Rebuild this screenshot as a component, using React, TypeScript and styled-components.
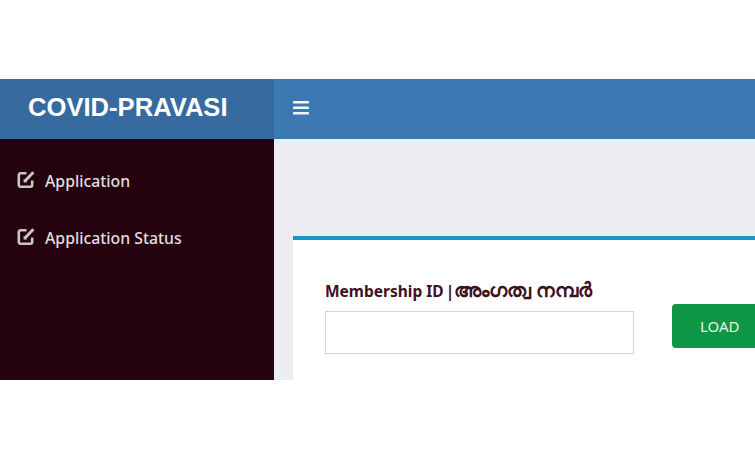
import React from 'react';
import styled, { createGlobalStyle } from 'styled-components';

const GlobalStyle = createGlobalStyle`
  html, body {
    margin: 0;
    padding: 0;
    background: #fff;
    overflow: hidden;
  }
  body {
    font-family: "Noto Sans", "Open Sans", sans-serif;
  }
`;

const Page = styled.div`
  width: 755px;
  height: 459px;
  padding-top: 79px;
  box-sizing: border-box;
`;

const Frame = styled.div`
  display: grid;
  grid-template-columns: 274px 1fr;
  grid-template-rows: 60px 241px;
  height: 301px;
  overflow: hidden;
`;

const Brand = styled.div`
  display: flex;
  align-items: center;
  padding: 0 0 3px 28px;
  box-sizing: border-box;
  background: #376a9f;
  color: #fff;
  font-family: "Liberation Sans", Arial, sans-serif;
  font-size: 25.6px;
  font-weight: 700;
`;

const TopBar = styled.div`
  display: flex;
  align-items: center;
  padding: 0 0 3px 19px;
  background: #3c79b3;
`;

const MenuButton = styled.svg`
  width: 16px;
  height: 14px;
  display: block;
`;

const Sidebar = styled.nav`
  display: flex;
  flex-direction: column;
  gap: 36px;
  padding: 32px 0 0 17px;
  background: #24030f;
`;

const NavItem = styled.a`
  display: flex;
  align-items: center;
  gap: 9px;
  height: 21px;
  color: #e2dee0;
  font-size: 15.8px;
  font-weight: 500;
  line-height: 21px;
`;

const NavIcon = styled.svg`
  width: 19px;
  height: 19px;
  flex: none;
  margin-top: -5px;
`;

const Content = styled.main`
  padding: 97px 0 0 19px;
  background: #ecedf3;
`;

const Card = styled.section`
  display: flex;
  gap: 38px;
  height: 200px;
  box-sizing: border-box;
  padding: 39px 0 0 32px;
  background: #fff;
  border-top: 4px solid #1a95bd;
`;

const Field = styled.div`
  display: flex;
  flex-direction: column;
  gap: 11px;
`;

const Label = styled.label`
  color: #3f1022;
  font-size: 15.5px;
  font-weight: 700;
  line-height: 21px;
  height: 21px;
  white-space: nowrap;
`;

const Divider = styled.span`
  margin: 0 0 0 2px;
`;

const NativeName = styled.span`
  font-size: 19.6px;
  line-height: 21px;
`;

const TextInput = styled.input`
  width: 309px;
  height: 43px;
  box-sizing: border-box;
  border: 1px solid #d8d2d6;
  background: #fff;
  outline: none;
`;

const LoadButton = styled.button`
  width: 100px;
  height: 44px;
  margin-top: 25px;
  flex: none;
  padding: 0;
  box-sizing: border-box;
  border: none;
  border-radius: 4px 0 0 4px;
  background: #0c9646;
  color: #e4f3ea;
  font-family: inherit;
  font-size: 15px;
  text-align: left;
  text-indent: 28px;
`;

const EditIcon = () => (
  <NavIcon viewBox="0 0 19 19" fill="none" stroke="#c9c5c8" strokeWidth="2.6" aria-hidden="true">
    <path d="M9.5 3.3H3.5A1.7 1.7 0 0 0 1.8 5v10a1.7 1.7 0 0 0 1.7 1.7h10a1.7 1.7 0 0 0 1.7-1.7V10.5" />
    <path d="M8 11 16.4 2.2" strokeWidth="3" />
    <path d="M6.6 8.8v3.6h3.6z" fill="#c9c5c8" stroke="none" />
  </NavIcon>
);

const App: React.FC = () => {
  return (
    <Page>
      <GlobalStyle />
      <Frame>
        <Brand>COVID-PRAVASI</Brand>
        <TopBar>
          <MenuButton viewBox="0 0 16 14" fill="#f2f5f9" aria-hidden="true">
            <rect x="0" y="0" width="16" height="2.6" rx="0.6" />
            <rect x="0" y="5.5" width="16" height="2.6" rx="0.6" />
            <rect x="0" y="11" width="16" height="2.6" rx="0.6" />
          </MenuButton>
        </TopBar>
        <Sidebar>
          <NavItem>
            <EditIcon />
            Application
          </NavItem>
          <NavItem>
            <EditIcon />
            Application Status
          </NavItem>
        </Sidebar>
        <Content>
          <Card>
            <Field>
              <Label>
                Membership ID<Divider>|</Divider><NativeName>അംഗത്വ നമ്പർ</NativeName>
              </Label>
              <TextInput type="text" />
            </Field>
            <LoadButton>LOAD</LoadButton>
          </Card>
        </Content>
      </Frame>
    </Page>
  );
};

export default App;
